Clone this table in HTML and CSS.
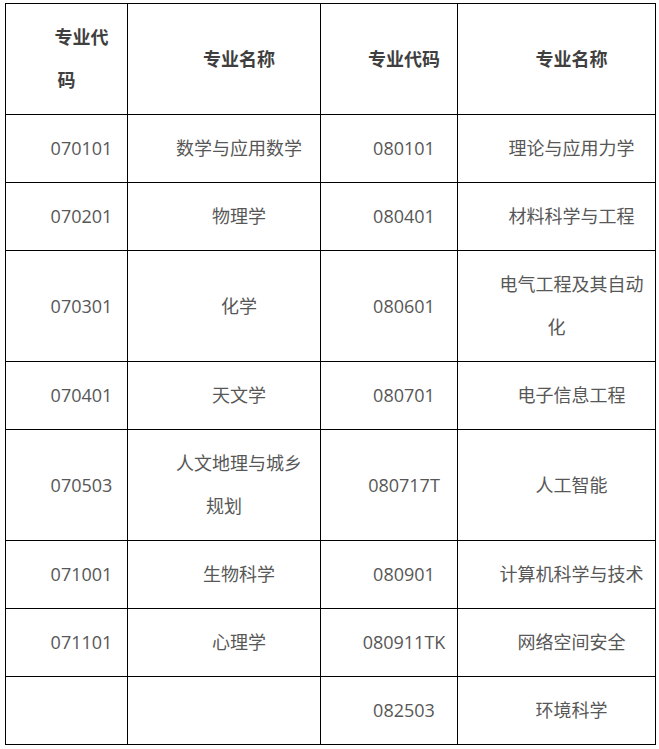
FILE: index.html
```html
<!DOCTYPE html>
<html lang="zh-CN">
<head>
<meta charset="utf-8">
<title>专业代码</title>
<link rel="stylesheet" href="styles.css">
</head>
<body>
<table class="majors">
  <colgroup>
    <col class="c1"><col class="c2"><col class="c3"><col class="c4">
  </colgroup>
  <tr class="head">
    <td class="first">专业代码</td><td>专业名称</td><td>专业代码</td><td class="wide">专业名称</td>
  </tr>
  <tr><td class="first">070101</td><td>数学与应用数学</td><td>080101</td><td class="wide">理论与应用力学</td></tr>
  <tr><td class="first">070201</td><td>物理学</td><td>080401</td><td class="wide">材料科学与工程</td></tr>
  <tr><td class="first">070301</td><td>化学</td><td>080601</td><td class="wide">电气工程及其自动化</td></tr>
  <tr><td class="first">070401</td><td>天文学</td><td>080701</td><td class="wide">电子信息工程</td></tr>
  <tr><td class="first">070503</td><td>人文地理与城乡规划</td><td>080717T</td><td class="wide">人工智能</td></tr>
  <tr><td class="first">071001</td><td>生物科学</td><td>080901</td><td class="wide">计算机科学与技术</td></tr>
  <tr><td class="first">071101</td><td>心理学</td><td>080911TK</td><td class="wide">网络空间安全</td></tr>
  <tr><td class="first"></td><td></td><td>082503</td><td class="wide">环境科学</td></tr>
</table>
</body>
</html>
```

FILE: styles.css
```css
html, body {
  margin: 0;
  padding: 0;
  background: #ffffff;
}
body {
  padding: 3px 0 0 5px;
}
.majors {
  border-collapse: collapse;
  table-layout: fixed;
  width: 651px;
  font-family: "Open Sans", "Noto Sans CJK SC", sans-serif;
  font-size: 18px;
  color: #575757;
}
.c1 { width: 122px; }
.c2 { width: 193px; }
.c3 { width: 137px; }
.c4 { width: 198px; }
.majors td {
  border: 1px solid #000000;
  padding: 12px 10px;
  line-height: 43px;
  text-align: center;
  text-indent: 30px;
  vertical-align: middle;
  word-break: break-all;
}
.majors td.first {
  padding-left: 11px;
  padding-right: 11px;
}
.majors td.wide {
  padding-left: 6px;
  padding-right: 6px;
}
.head td {
  font-weight: bold;
  color: #3f3f3f;
}
```
